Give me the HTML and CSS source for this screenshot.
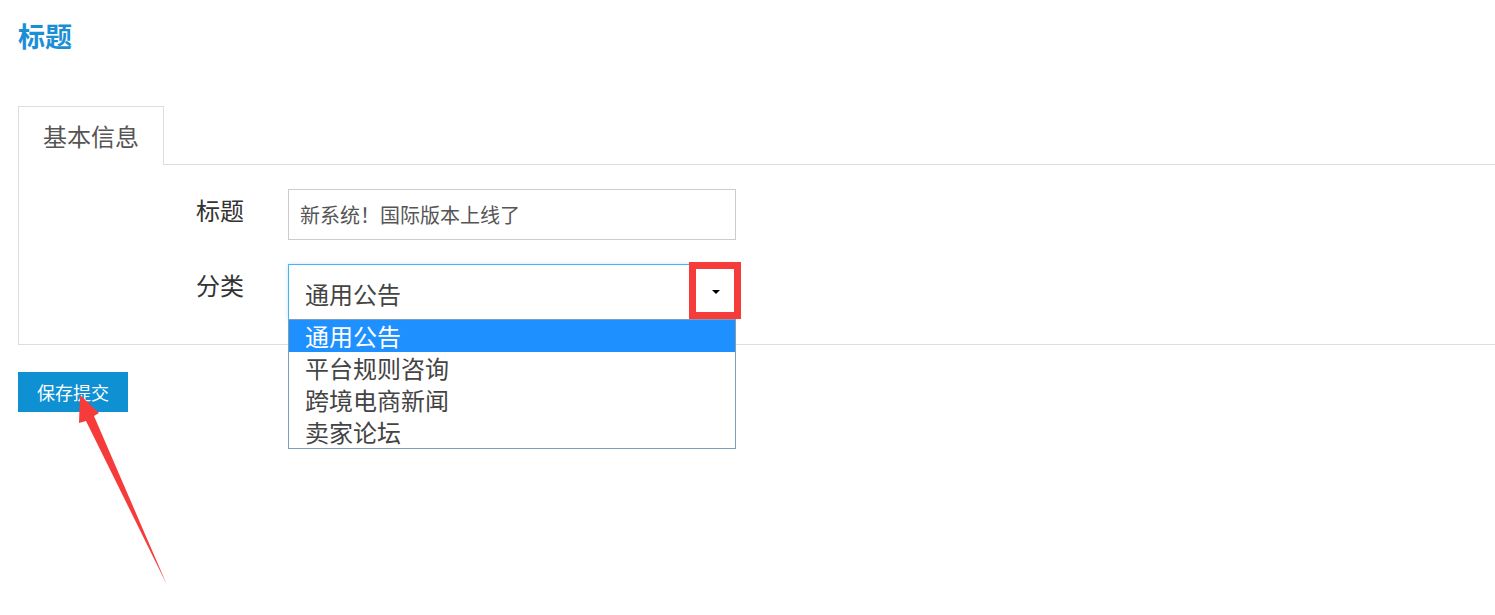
FILE: index.html
```html
<!DOCTYPE html>
<html lang="zh-CN">
<head>
<meta charset="utf-8">
<title>标题</title>
<link rel="stylesheet" href="styles.css">
</head>
<body>
<div class="page">
  <h1 class="title">标题</h1>
  <div class="tabs">
    <div class="tab">基本信息</div>
    <div class="tab-fill"></div>
  </div>
  <div class="panel">
    <div class="form-row">
      <label class="label">标题</label>
      <div class="control">
        <input class="input" type="text" value="新系统！国际版本上线了">
      </div>
    </div>
    <div class="form-row">
      <label class="label">分类</label>
      <div class="control select-wrap">
        <div class="select">
          <span class="select-value">通用公告</span>
          <span class="caret"></span>
        </div>
        <div class="mark-box"></div>
        <ul class="options">
          <li class="option active">通用公告</li>
          <li class="option">平台规则咨询</li>
          <li class="option">跨境电商新闻</li>
          <li class="option">卖家论坛</li>
        </ul>
      </div>
    </div>
  </div>
  <button class="btn" type="button">保存提交</button>
  <svg class="mark-arrow" width="200" height="600" viewBox="0 0 200 600">
    <polygon points="80,395 99,413 94,416 167,585 86,421 79,423" fill="#f63b3b"/>
  </svg>
</div>
</body>
</html>
```
FILE: styles.css
```css
* { box-sizing: border-box; }
html, body { margin: 0; padding: 0; background: #fff; }
body {
  font-family: "Noto Sans CJK SC", "Microsoft YaHei", sans-serif;
  color: #333;
  overflow: hidden;
}
.page {
  position: relative;
  padding: 18px 0 0 18px;
  min-height: 615px;
}
.title {
  margin: 0;
  font-size: 27px;
  line-height: 36px;
  font-weight: bold;
  color: #1b8fd5;
}
.tabs {
  display: flex;
  margin-top: 52px;
}
.tab {
  height: 59px;
  padding: 0 24px;
  border: 1px solid #ddd;
  border-bottom: none;
  font-size: 24px;
  line-height: 57px;
  color: #555;
  background: #fff;
}
.tab-fill {
  flex: 1;
  height: 59px;
  border-bottom: 1px solid #ddd;
}
.panel {
  border-left: 1px solid #ddd;
  border-bottom: 1px solid #ddd;
  padding: 24px 0 24px;
  display: flex;
  flex-direction: column;
  gap: 24px;
}
.form-row {
  display: grid;
  grid-template-columns: 269px 448px;
}
.label {
  padding-left: 177px;
  font-size: 24px;
  line-height: 42px;
  color: #333;
}
.control { position: relative; }
.input {
  display: block;
  width: 448px;
  height: 51px;
  margin: 0;
  padding: 0 11px;
  border: 1px solid #ccc;
  font-family: inherit;
  font-size: 20px;
  color: #555;
  outline: none;
  background: #fff;
  font-feature-settings: "fwid" 1;
}
.select {
  display: flex;
  align-items: center;
  justify-content: space-between;
  height: 56px;
  padding: 2px 15px 0 16px;
  border: 1px solid #4ab3f0;
  box-shadow: 0 0 4px rgba(74, 179, 240, 0.35);
  background: #fff;
  font-size: 24px;
  color: #444;
}
.caret {
  width: 0;
  height: 0;
  border-left: 4px solid transparent;
  border-right: 4px solid transparent;
  border-top: 4px solid #000;
  margin-top: -2px;
}
.mark-box {
  position: absolute;
  left: 401px;
  top: -2px;
  width: 52px;
  height: 57px;
  border: 7px solid #f63b3b;
  z-index: 3;
}
.options {
  position: absolute;
  left: 0;
  top: 55px;
  width: 448px;
  margin: 0;
  padding: 0;
  list-style: none;
  border: 1px solid #7f9db9;
  background: #fff;
  z-index: 2;
}
.option {
  height: 32px;
  padding-left: 16px;
  font-size: 24px;
  line-height: 32px;
  color: #444;
}
.option.active {
  background: #1e90ff;
  color: #fff;
}
.btn {
  display: block;
  margin-top: 27px;
  width: 110px;
  height: 40px;
  padding: 0;
  border: none;
  background: #0e90d2;
  color: #fff;
  font-family: inherit;
  font-size: 18px;
  line-height: 40px;
}
.mark-arrow {
  position: absolute;
  left: 0;
  top: 0;
  z-index: 5;
  pointer-events: none;
}
```
